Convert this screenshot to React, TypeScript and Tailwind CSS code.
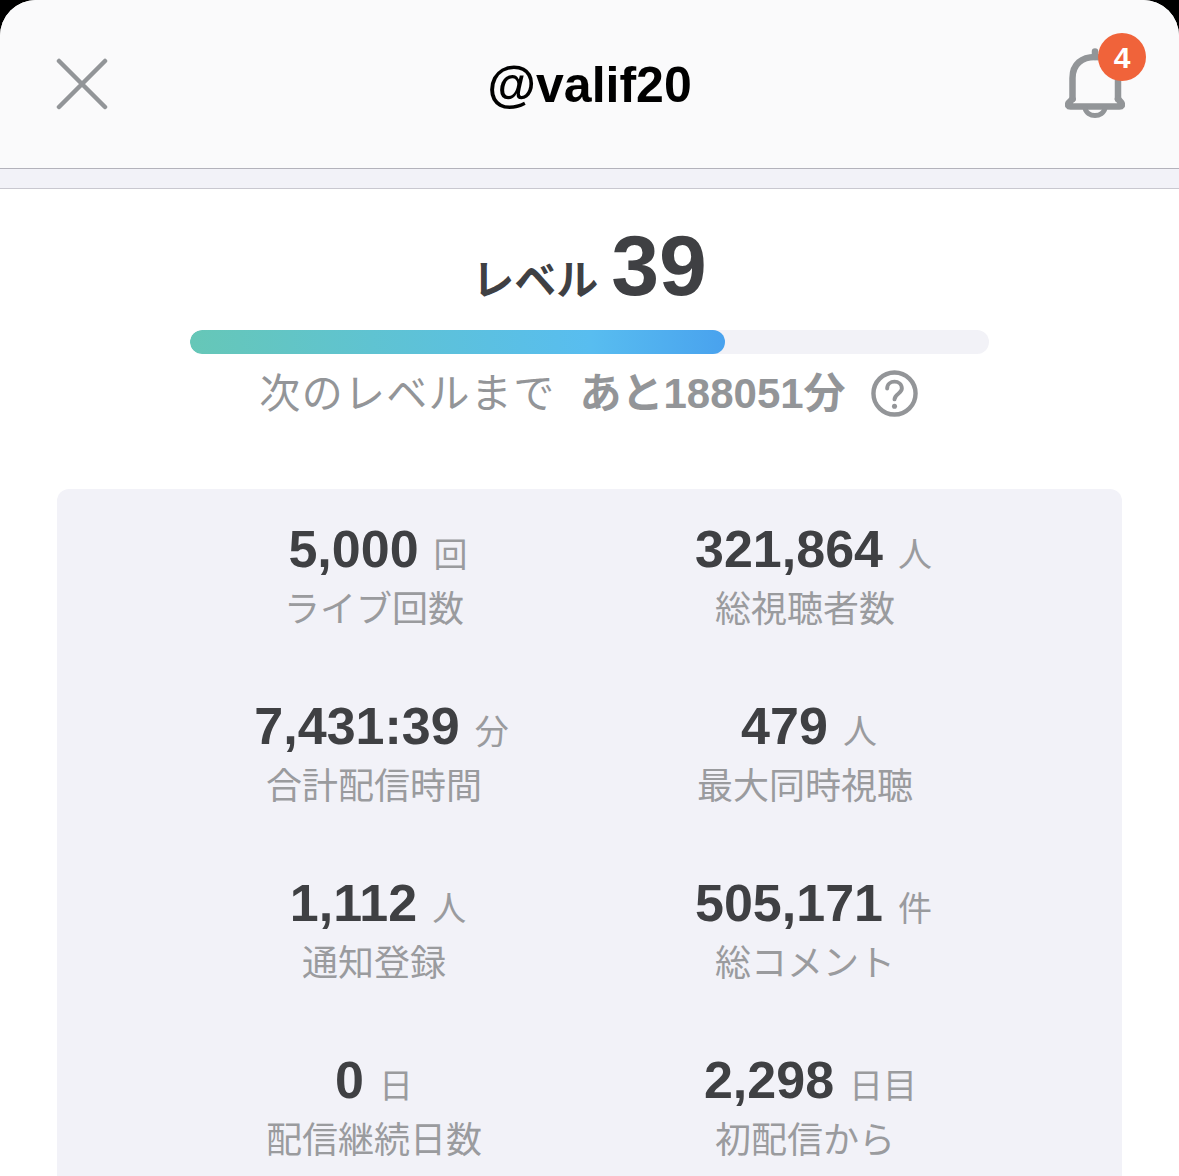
const font = { fontFamily: '"Liberation Sans", "Noto Sans CJK JP", sans-serif' };

const stats = [
  ["5,000", "回", "ライブ回数", "pl-[8px]"],
  ["321,864", "人", "総視聴者数", "pl-[17px]"],
  ["7,431:39", "分", "合計配信時間", "pl-[15px]"],
  ["479", "人", "最大同時視聴", "pl-[8px]"],
  ["1,112", "人", "通知登録", "pl-[8px]"],
  ["505,171", "件", "総コメント", "pl-[17px]"],
  ["0", "日", "配信継続日数", "pl-0"],
  ["2,298", "日目", "初配信から", "pl-[11px]"],
];

function Stat({ value, unit, label, shift }: { value: string; unit: string; label: string; shift: string }) {
  return (
    <div className="flex h-[177px] flex-col items-center pt-[30px]">
      <div className={`flex h-[56px] items-baseline justify-center gap-[15px] ${shift}`}>
        <span className="text-[52px] leading-[56px] font-bold text-[#3f4043]">{value}</span>
        <span className="text-[34px] leading-[56px] text-[#9a9b9e]">{unit}</span>
      </div>
      <div className="mt-[5px] text-[36px] leading-[56px] text-[#9a9b9e]">{label}</div>
    </div>
  );
}

export default function App() {
  return (
    <div className="h-[1176px] w-[1179px] overflow-hidden bg-black" style={font}>
      <div className="h-full overflow-hidden rounded-t-[36px] bg-white">
        <header className="flex h-[169px] items-center justify-between border-b border-[#b3b2bb] bg-[#fafafb] pr-[33px] pl-[55px]">
          <svg width="52" height="52" viewBox="0 0 52 52" fill="none" stroke="#929598" strokeWidth="4.5" strokeLinecap="round" className="mt-[-1px] ml-[1px]">
            <path d="M3 3 L49 49 M49 3 L3 49" />
          </svg>
          <h1 className="mt-[2px] ml-[5px] text-[50px] font-bold text-black">@valif20</h1>
          <div className="relative mt-[-26px] h-[84px] w-[80px]">
            <svg width="60" height="71" viewBox="0 0 60 71" fill="none" stroke="#929598" strokeWidth="6.5" strokeLinecap="round" strokeLinejoin="round" className="absolute top-[19px] left-[-1px]">
              <path d="M30 3.5 V9" />
              <path d="M7.5 51 V30 C7.5 16 17 9 30 9 C43 9 53 16 53 30 V51" />
              <path d="M7.5 51 L3.5 55 Q2 58.5 5.5 58.5 H54.5 Q58 58.5 56.5 55 L53 51" />
              <path d="M20 60 C22 70 38 70 40 60" strokeWidth="5" />
            </svg>
            <div className="absolute top-[4px] right-0 flex h-[48px] w-[48px] items-center justify-center rounded-full bg-[#f0633a] text-[30px] font-bold text-white">4</div>
          </div>
        </header>
        <div className="h-[20px] border-b border-[#c9c8d0] bg-[#f2f2f8]" />

        <section className="flex flex-col items-center">
          <div className="mt-[25px] flex h-[102px] items-baseline justify-center gap-[13px]">
            <span className="text-[42px] leading-[102px] font-bold text-[#3f4043]">レベル</span>
            <span className="text-[86px] leading-[102px] font-bold text-[#3f4043]">39</span>
          </div>
          <div className="mt-[14px] h-[24px] w-[799px] overflow-hidden rounded-full bg-[#f2f2f7]">
            <div className="h-full w-[535px] rounded-full bg-gradient-to-r from-[#66c7b7] via-[#58bdf0] via-75% to-[#49a2ee]" />
          </div>
          <div className="mt-[10px] flex h-[58px] items-center justify-center text-[#939598]">
            <span className="mt-[4px] text-[41px] tracking-[1.3px]">次のレベルまで</span>
            <span className="ml-[24px] text-[42px] font-bold">あと188051分</span>
            <svg width="47" height="47" viewBox="0 0 48 48" fill="none" stroke="#939598" className="mr-[2px] ml-[25px]">
              <circle cx="24" cy="24" r="21.5" strokeWidth="4.5" />
              <path d="M16.5 19 C16.5 9.5 31.5 9.5 31.5 19 C31.5 24 24 24.5 24 30" strokeWidth="4" strokeLinecap="round" />
              <circle cx="24" cy="37" r="2.6" fill="#939598" stroke="none" />
            </svg>
          </div>
        </section>

        <section className="mx-[57px] mt-[67px] h-[720px] rounded-[12px] bg-[#f2f2f8] pt-[2px]">
          <div className="mx-auto grid w-[862px] grid-cols-2">
            {stats.map(([value, unit, label, shift]) => (
              <Stat key={label} value={value} unit={unit} label={label} shift={shift} />
            ))}
          </div>
        </section>
      </div>
    </div>
  );
}
